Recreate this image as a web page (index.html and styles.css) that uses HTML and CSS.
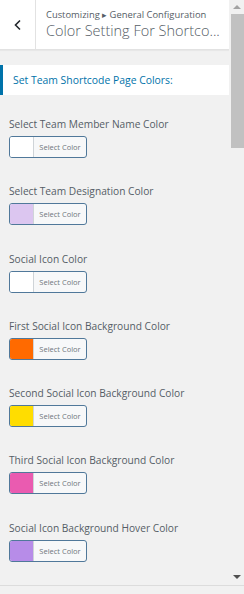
FILE: index.html
```html
<!doctype html>
<html lang="en">
<head>
    <meta charset="UTF-8">
    <meta name="viewport" content="width=device-width, initial-scale=1.0">
    <link rel="stylesheet" href="styles.css">
    <title>Customizing</title>
</head>
<body>
<div class="frame">
    <div class="panel">
        <div class="content">
            <div class="header">
                <button class="back">
                    <svg width="10" height="12" viewBox="0 0 10 12"><path d="M7 1.5 L2.5 6 L7 10.5" fill="none" stroke="#23282d" stroke-width="1.6"/></svg>
                </button>
                <div class="header-title">
                    <div class="crumbs">Customizing &#9656; General Configuration</div>
                    <div class="title">Color Setting For Shortco...</div>
                </div>
            </div>

            <div class="section-title">Set Team Shortcode Page Colors:</div>

            <div class="controls">
                <div class="control">
                    <div class="label">Select Team Member Name Color</div>
                    <button class="picker"><span class="swatch" style="background:#ffffff"></span><span class="picker-text">Select Color</span></button>
                </div>
                <div class="control">
                    <div class="label">Select Team Designation Color</div>
                    <button class="picker"><span class="swatch" style="background:#dcc6f0"></span><span class="picker-text">Select Color</span></button>
                </div>
                <div class="control">
                    <div class="label">Social Icon Color</div>
                    <button class="picker"><span class="swatch" style="background:#ffffff"></span><span class="picker-text">Select Color</span></button>
                </div>
                <div class="control">
                    <div class="label">First Social Icon Background Color</div>
                    <button class="picker"><span class="swatch" style="background:#ff6a00"></span><span class="picker-text">Select Color</span></button>
                </div>
                <div class="control">
                    <div class="label">Second Social Icon Background Color</div>
                    <button class="picker"><span class="swatch" style="background:#ffdd00"></span><span class="picker-text">Select Color</span></button>
                </div>
                <div class="control">
                    <div class="label">Third Social Icon Background Color</div>
                    <button class="picker"><span class="swatch" style="background:#ea5bb0"></span><span class="picker-text">Select Color</span></button>
                </div>
                <div class="control">
                    <div class="label">Social Icon Background Hover Color</div>
                    <button class="picker"><span class="swatch" style="background:#b78ce8"></span><span class="picker-text">Select Color</span></button>
                </div>
            </div>
        </div>
        <div class="scrollbar">
            <div class="arrow up"></div>
            <div class="thumb"></div>
            <div class="arrow down"></div>
        </div>
    </div>
    <div class="footer"></div>
</div>
</body>
</html>
```
FILE: styles.css
```css
body {
    margin: 0;
    background: #f1f1f1;
    font-family: "Open Sans", "Noto Sans", sans-serif;
    color: #555d66;
    overflow: hidden;
}

.frame {
    display: flex;
    flex-direction: column;
    height: 594px;
}

.panel {
    display: flex;
    height: 585px;
    border-bottom: 1px solid #dcdcdc;
}

.content {
    width: 229px;
    overflow: hidden;
}

.header {
    display: flex;
    height: 49px;
    background: #fff;
    border-bottom: 1px solid #e2e2e2;
    box-shadow: 0 1px 1px rgba(0, 0, 0, .04);
}

.back {
    width: 36px;
    border: none;
    border-right: 1px solid #e2e2e2;
    background: #fff;
    padding: 0;
    display: flex;
    align-items: center;
    justify-content: center;
}

.header-title {
    padding: 8px 0 0 10px;
    min-width: 0;
    flex: 1;
}

.crumbs {
    font-size: 9.4px;
    line-height: 13px;
    color: #555d66;
}

.title {
    font-size: 14.5px;
    line-height: 20px;
    color: #555d66;
    font-weight: 300;
    white-space: nowrap;
}

.section-title {
    margin-top: 15px;
    height: 30px;
    line-height: 30px;
    background: #fff;
    border-left: 3px solid #0073aa;
    padding-left: 10px;
    font-size: 10.4px;
    color: #0073aa;
}

.controls {
    padding: 21px 9px 0;
}

.control {
    margin-bottom: 25.3px;
}

.label {
    font-size: 10.2px;
    line-height: 16px;
    color: #555d66;
}

.picker {
    display: flex;
    margin-top: 4px;
    width: 78px;
    height: 22px;
    padding: 0;
    border: 1px solid #50789a;
    border-radius: 3px;
    background: #f7f8f9;
    overflow: hidden;
}

.swatch {
    width: 23px;
    height: 100%;
    border-right: 1px solid #cfd4d8;
}

.picker-text {
    flex: 1;
    font-family: "Open Sans", sans-serif;
    font-size: 7.5px;
    line-height: 20px;
    color: #6f767d;
    text-align: center;
}

.scrollbar {
    width: 15px;
    display: flex;
    flex-direction: column;
    align-items: center;
    background: #f1f1f1;
}

.thumb {
    width: 13px;
    height: 134px;
    background: #c1c1c1;
    margin-top: 5px;
    margin-left: 1px;
}

.arrow {
    width: 0;
    height: 0;
    border-left: 4px solid transparent;
    border-right: 4px solid transparent;
}

.arrow.up {
    margin-top: 5px;
    border-bottom: 4px solid #a3a3a3;
}

.arrow.down {
    margin-top: auto;
    margin-bottom: 6px;
    border-top: 4px solid #505050;
}

.footer {
    flex: 1;
    background: #f1f1f1;
}
```
